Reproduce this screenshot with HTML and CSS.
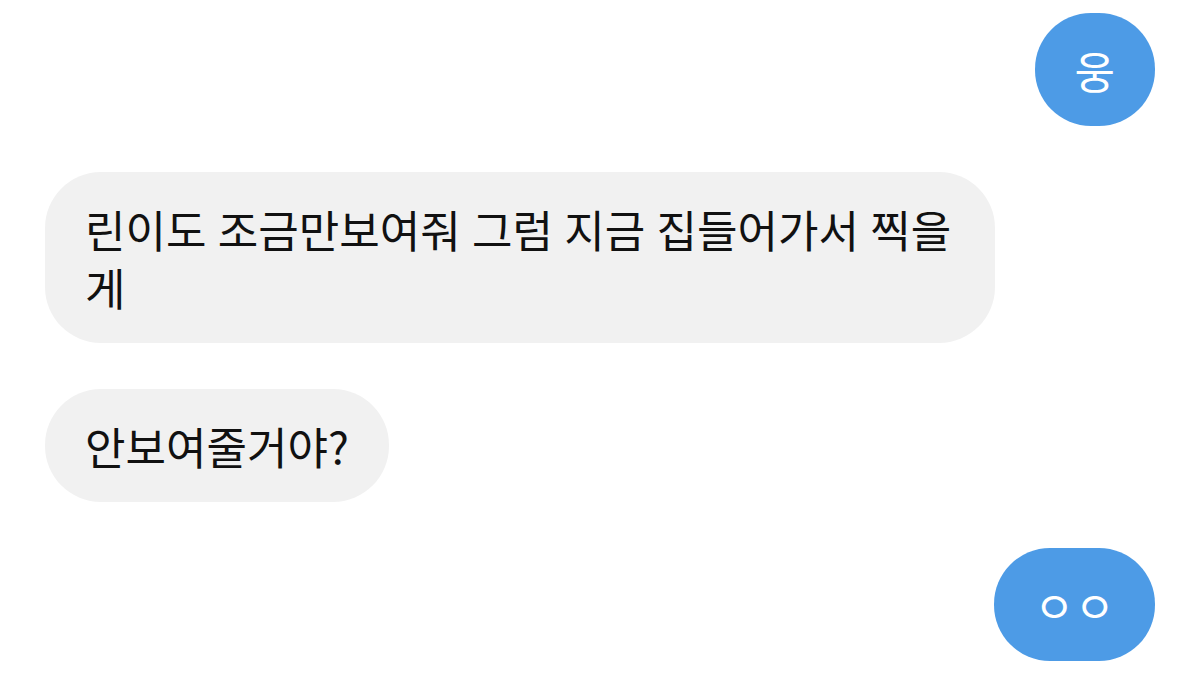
FILE: index.html
```html
<!DOCTYPE html>
<html lang="ko">
<head>
<meta charset="utf-8">
<link rel="stylesheet" href="styles.css">
</head>
<body>
<div class="chat">
  <div class="row row-out"><div class="bubble out">웅</div></div>
  <div class="row row-in"><div class="bubble in">린이도 조금만보여줘 그럼 지금 집들어가서 찍을게</div></div>
  <div class="row row-in"><div class="bubble in">안보여줄거야?</div></div>
  <div class="row row-out"><div class="bubble out">ㅇㅇ</div></div>
</div>
</body>
</html>
```
FILE: styles.css
```css
html, body {
  margin: 0;
  padding: 0;
  background: #ffffff;
}
body {
  font-family: "Noto Sans CJK KR", "Noto Sans", sans-serif;
}
.chat {
  display: flex;
  flex-direction: column;
  gap: 46px;
  padding: 13px 45px 0 45px;
}
.row {
  display: flex;
}
.row-out {
  justify-content: flex-end;
}
.row-in {
  justify-content: flex-start;
}
.bubble {
  max-width: 950px;
  box-sizing: border-box;
  padding: 27.5px 40px;
  border-radius: 56px;
  font-size: 44px;
  line-height: 58px;
  word-spacing: -1px;
}
.in {
  background: #f1f1f1;
  color: #111111;
}
.out {
  background: #4d9be6;
  color: #ffffff;
}
```
